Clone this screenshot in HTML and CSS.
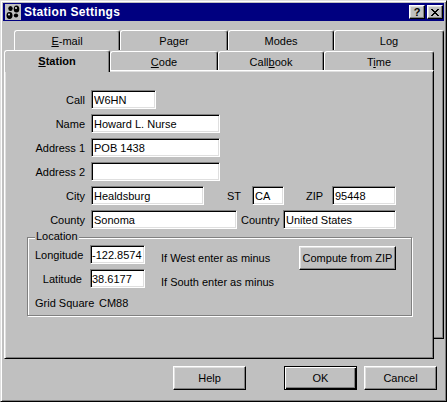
FILE: index.html
```html
<!DOCTYPE html>
<html>
<head>
<meta charset="utf-8">
<title>Station Settings</title>
<link rel="stylesheet" href="styles.css">
</head>
<body>
<div class="window">
  <div class="titlebar">
    <svg class="appicon" viewBox="0 0 16 16" width="16" height="16">
      <rect width="16" height="16" fill="#c0c0c0"/>
      <ellipse cx="5.5" cy="4.5" rx="2.2" ry="2.5" fill="#000"/>
      <ellipse cx="11.5" cy="5" rx="2.8" ry="3.6" fill="#000"/>
      <ellipse cx="4.5" cy="11.5" rx="3" ry="3.4" fill="#000"/>
      <ellipse cx="11" cy="11.5" rx="2.2" ry="2" fill="#000"/>
      <circle cx="11" cy="4" r="0.9" fill="#fff"/>
      <circle cx="4" cy="10.5" r="0.9" fill="#fff"/>
    </svg>
    <span class="title">Station Settings</span>
    <span class="tbtn help">?</span>
    <span class="tbtn close">
      <svg width="8" height="7" viewBox="0 0 8 7" shape-rendering="crispEdges"><path fill="#000" d="M0 0h2v1h-2zM6 0h2v1h-2zM1 1h2v1h-2zM5 1h2v1h-2zM2 2h4v1h-4zM3 3h2v1h-2zM2 4h4v1h-4zM1 5h2v1h-2zM5 5h2v1h-2zM0 6h2v1h-2zM6 6h2v1h-2z"/></svg>
    </span>
  </div>
  <div class="client">
    <div class="tabrow back-row">
      <div class="tab wa"><span><u>E</u>-mail</span></div>
      <div class="tab wb">Pager</div>
      <div class="tab wa">Modes</div>
      <div class="tab wd">Log</div>
    </div>
    <div class="backpanel">
      <div class="front">
        <div class="tabrow front-row">
          <div class="tab selected wa"><span><u>S</u>tation</span></div>
          <div class="tab wb"><span><u>C</u>ode</span></div>
          <div class="tab wa"><span>Call<u>b</u>ook</span></div>
          <div class="tab wd"><span>T<u>i</u>me</span></div>
        </div>
        <div class="panel">
          <div class="form">
            <div class="row"><label class="lbl">Call</label><input class="field w-call" type="text" value="W6HN"></div>
            <div class="row"><label class="lbl">Name</label><input class="field w-name" type="text" value="Howard L. Nurse"></div>
            <div class="row"><label class="lbl">Address 1</label><input class="field w-name" type="text" value="POB 1438"></div>
            <div class="row"><label class="lbl">Address 2</label><input class="field w-name" type="text" value=""></div>
            <div class="row"><label class="lbl">City</label><input class="field w-city" type="text" value="Healdsburg"><label class="lbl2 l-st">ST</label><input class="field w-st" type="text" value="CA"><label class="lbl2 l-zip">ZIP</label><input class="field w-zip" type="text" value="95448"></div>
            <div class="row"><label class="lbl">County</label><input class="field w-county" type="text" value="Sonoma"><label class="lbl2 l-country">Country</label><input class="field w-country" type="text" value="United States"></div>
          </div>
          <div class="group">
            <div class="legend">Location</div>
            <div class="grow first"><span class="glbl">Longitude</span><input class="field w-coord" type="text" value="-122.8574"><span class="hint">If West enter as minus</span><button class="btn compute" type="button">Compute from ZIP</button></div>
            <div class="grow"><span class="glbl">Latitude</span><input class="field w-coord" type="text" value="38.6177"><span class="hint">If South enter as minus</span></div>
            <div class="gridrow"><span class="gs">Grid Square</span><span>CM88</span></div>
          </div>
        </div>
      </div>
    </div>
    <div class="buttons">
      <button class="btn" type="button">Help</button>
      <button class="btn default ok" type="button">OK</button>
      <button class="btn cancel" type="button">Cancel</button>
    </div>
  </div>
</div>
</body>
</html>
```

FILE: styles.css
```css
* { box-sizing: border-box; }
html, body { margin: 0; padding: 0; }
body {
  background: #c0c0c0;
  font-family: "Liberation Sans", Arial, sans-serif;
  font-size: 11px;
  color: #000;
}
.window {
  width: 447px;
  height: 402px;
  border: 1px solid;
  border-color: #dfdfdf #000 #000 #dfdfdf;
  box-shadow: inset 1px 1px #fff, inset -1px -1px #808080;
  padding: 2px;
  background: #c0c0c0;
  overflow: hidden;
}
.titlebar {
  height: 18px;
  background: #000080;
  display: flex;
  align-items: center;
  padding: 0 1px 0 2px;
}
.appicon { flex: none; display: block; }
.title {
  margin-left: 3px;
  color: #fff;
  font-weight: bold;
  font-size: 12px;
  letter-spacing: 0.3px;
}
.tbtn {
  width: 16px;
  height: 14px;
  flex: none;
  background: #c0c0c0;
  border: 1px solid;
  border-color: #fff #000 #000 #fff;
  box-shadow: inset -1px -1px #808080, inset 1px 1px #dfdfdf;
  display: flex;
  align-items: center;
  justify-content: center;
}
.tbtn svg { display: block; }
.tbtn.help {
  margin-left: auto;
  font-weight: bold;
  font-size: 11px;
  line-height: 12px;
  padding-bottom: 1px;
}
.tbtn.close { margin-left: 2px; }

.client { padding: 9px 0 0 1px; }

.tabrow {
  display: flex;
  align-items: flex-start;
  height: 20px;
}
.back-row { margin-left: 10px; }
.tab {
  height: 20px;
  flex: none;
  background: #c0c0c0;
  border-top: 1px solid #fff;
  border-left: 1px solid #fff;
  border-right: 1px solid #000;
  border-radius: 3px 3px 0 0;
  box-shadow: inset -1px 0 #808080;
  display: flex;
  align-items: center;
  justify-content: center;
  padding-top: 1px;
}
.wa { width: 106px; }
.wb { width: 108px; }
.wd { width: 110px; }
.front-row .tab {
  margin-top: 1px;
  height: 19px;
}
.front-row .tab.selected {
  margin-top: 0;
  height: 22px;
  margin-bottom: -2px;
  position: relative;
  z-index: 2;
  font-weight: bold;
  padding-top: 0;
  padding-bottom: 1px;
}

.backpanel {
  margin-left: 10px;
  width: 430px;
  border-right: 1px solid #000;
  border-bottom: 1px solid #000;
  box-shadow: inset -1px -1px #808080;
}
.front {
  margin-left: -10px;
  width: 430px;
  margin-bottom: -21px;
}
.panel {
  position: relative;
  height: 289px;
  background: #c0c0c0;
  border: 1px solid;
  border-color: #fff #000 #000 #fff;
  box-shadow: inset 1px 1px #dfdfdf, inset -1px -1px #808080;
}
.form { padding-top: 19px; }
.row {
  display: flex;
  align-items: center;
  height: 19px;
  margin-bottom: 5px;
}
.lbl {
  width: 80px;
  margin-right: 6px;
  text-align: right;
  flex: none;
}
.lbl2 { flex: none; }
.l-st { margin-left: 23px; width: 25px; }
.l-zip { margin-left: 22px; width: 26px; }
.l-country { margin-left: 4px; width: 42px; }

.field {
  flex: none;
  height: 19px;
  margin: 0;
  padding: 0 0 0 2px;
  font-family: inherit;
  font-size: 11px;
  color: #000;
  background: #fff;
  border: 1px solid;
  border-color: #808080 #fff #fff #808080;
  box-shadow: inset 1px 1px #000, inset -1px -1px #dfdfdf;
  outline: none;
  border-radius: 0;
}
.w-call { width: 65px; }
.w-name { width: 129px; }
.w-city { width: 113px; }
.w-st { width: 32px; }
.w-zip { width: 64px; }
.w-county { width: 146px; }
.w-country { width: 113px; }
.w-coord { width: 55px; padding-left: 1px; }

.group {
  margin: 8px 0 0 22px;
  width: 385px;
  border: 1px solid #808080;
  box-shadow: inset 1px 1px #fff, 1px 1px #fff;
  padding: 0 15px 5px 7px;
}
.legend {
  display: table;
  margin-top: -8px;
  line-height: 13px;
  padding: 0 1px;
  background: #c0c0c0;
}
.grow {
  display: flex;
  align-items: center;
  height: 19px;
  margin-top: 5px;
}
.grow.first { margin-top: 2px; }
.glbl {
  width: 47px;
  text-align: right;
  flex: none;
}
.grow .field { margin-left: 8px; }
.hint {
  margin-left: 16px;
  padding-top: 6px;
  flex: none;
}
.gridrow {
  margin-top: 9px;
  height: 13px;
  line-height: 13px;
  display: flex;
}
.gs { width: 64px; flex: none; }

.btn {
  flex: none;
  width: 73px;
  height: 24px;
  margin: 0;
  padding: 0;
  font-family: inherit;
  font-size: 11px;
  color: #000;
  background: #c0c0c0;
  border: 1px solid;
  border-color: #fff #000 #000 #fff;
  box-shadow: inset -1px -1px #808080, inset 1px 1px #dfdfdf;
  border-radius: 0;
}
.btn.compute {
  width: 97px;
  margin-left: auto;
  align-self: flex-start;
  margin-top: 1px;
}
.btn.default {
  border-color: #000;
  box-shadow: inset 1px 1px #fff, inset -1px -1px #000, inset -2px -2px #808080;
}
.buttons {
  display: flex;
  justify-content: flex-end;
  padding-right: 7px;
  margin-top: 27px;
}
.ok { margin-left: 38px; }
.cancel { margin-left: 7px; }
```
